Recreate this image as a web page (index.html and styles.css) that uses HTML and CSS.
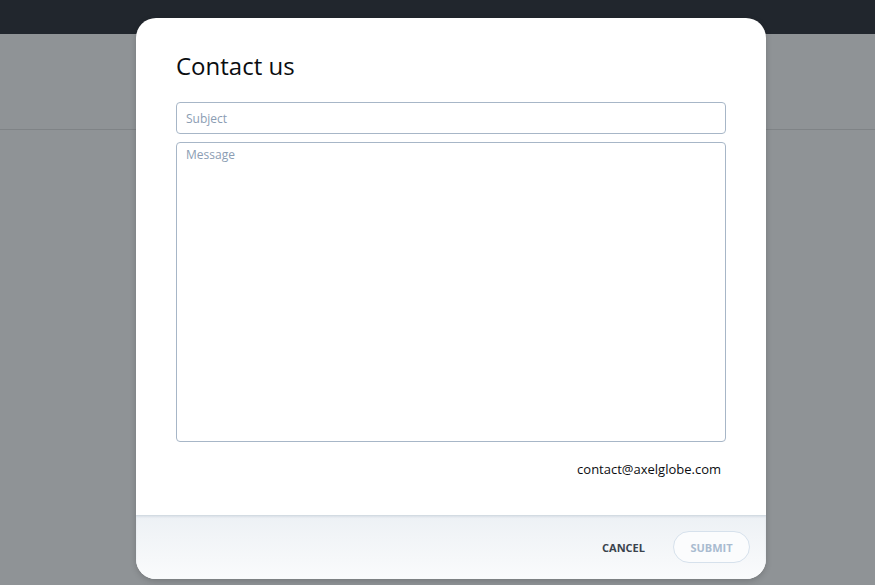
FILE: index.html
```html
<!DOCTYPE html>
<html lang="en">
<head>
<meta charset="utf-8">
<title>Contact us</title>
<link rel="stylesheet" href="styles.css">
</head>
<body>
<div class="topbar"></div>
<div class="header"></div>
<div class="content"></div>

<div class="modal">
  <div class="modal-body">
    <h1 class="title">Contact us</h1>
    <input class="field" type="text" placeholder="Subject">
    <textarea class="field area" placeholder="Message"></textarea>
    <div class="email">contact@axelglobe.com</div>
  </div>
  <div class="modal-footer">
    <button class="btn cancel" type="button">Cancel</button>
    <button class="btn submit" type="button">Submit</button>
  </div>
</div>
</body>
</html>
```

FILE: styles.css
```css
html, body {
  margin: 0;
  padding: 0;
  height: 100%;
}
body {
  font-family: "Open Sans", "Noto Sans", sans-serif;
  background: #8f9396;
  overflow: hidden;
}
.topbar {
  height: 34px;
  background: #21262d;
}
.header {
  height: 95px;
  background: #8f9396;
  border-bottom: 1px solid #7f8386;
}
.content {
  height: 456px;
  background: #8f9396;
}
.modal {
  position: absolute;
  left: 136px;
  top: 18px;
  width: 630px;
  height: 561px;
  background: #fff;
  border-radius: 20px;
  display: flex;
  flex-direction: column;
  overflow: hidden;
  box-shadow: 0 2px 6px rgba(0, 0, 0, 0.18);
}
.modal-body {
  flex: 1;
  padding: 32px 40px 0 40px;
  display: flex;
  flex-direction: column;
}
.title {
  margin: 0 0 20px 0;
  font-size: 24px;
  line-height: 32px;
  font-weight: 400;
  color: #0b0d10;
}
.field {
  box-sizing: border-box;
  width: 550px;
  height: 32px;
  border: 1px solid #a7b6c7;
  border-radius: 4px;
  padding: 0 9px;
  font-family: inherit;
  font-size: 12px;
  color: #333;
  background: #fff;
  outline: none;
  margin: 0;
}
.field::placeholder {
  color: #8b9db3;
}
.area {
  height: 300px;
  margin-top: 8px;
  padding: 3px 9px;
  line-height: 18px;
  resize: none;
  display: block;
}
.email {
  margin-top: 18px;
  padding-right: 5px;
  text-align: right;
  font-size: 13px;
  line-height: 18px;
  color: #0b0d10;
}
.modal-footer {
  height: 62px;
  padding-bottom: 1px;
  border-top: 1px solid #d3dbe2;
  background: linear-gradient(to bottom, #edf1f5 0%, #fafbfc 100%);
  display: flex;
  align-items: center;
  justify-content: flex-end;
  padding-right: 16px;
  box-shadow: inset 0 1px 2px rgba(160, 175, 190, 0.25);
}
.btn {
  font-family: inherit;
  font-size: 11px;
  font-weight: 700;
  text-transform: uppercase;
  letter-spacing: 0;
  height: 32px;
  border-radius: 16px;
  background: transparent;
  cursor: pointer;
}
.cancel {
  border: 1px solid transparent;
  color: #3a434d;
  padding: 0 16px;
  margin-right: 11px;
}
.submit {
  border: 1px solid #d6e1ec;
  color: #a9bbd0;
  width: 77px;
  padding: 0;
  background: #fbfcfd;
}
```
